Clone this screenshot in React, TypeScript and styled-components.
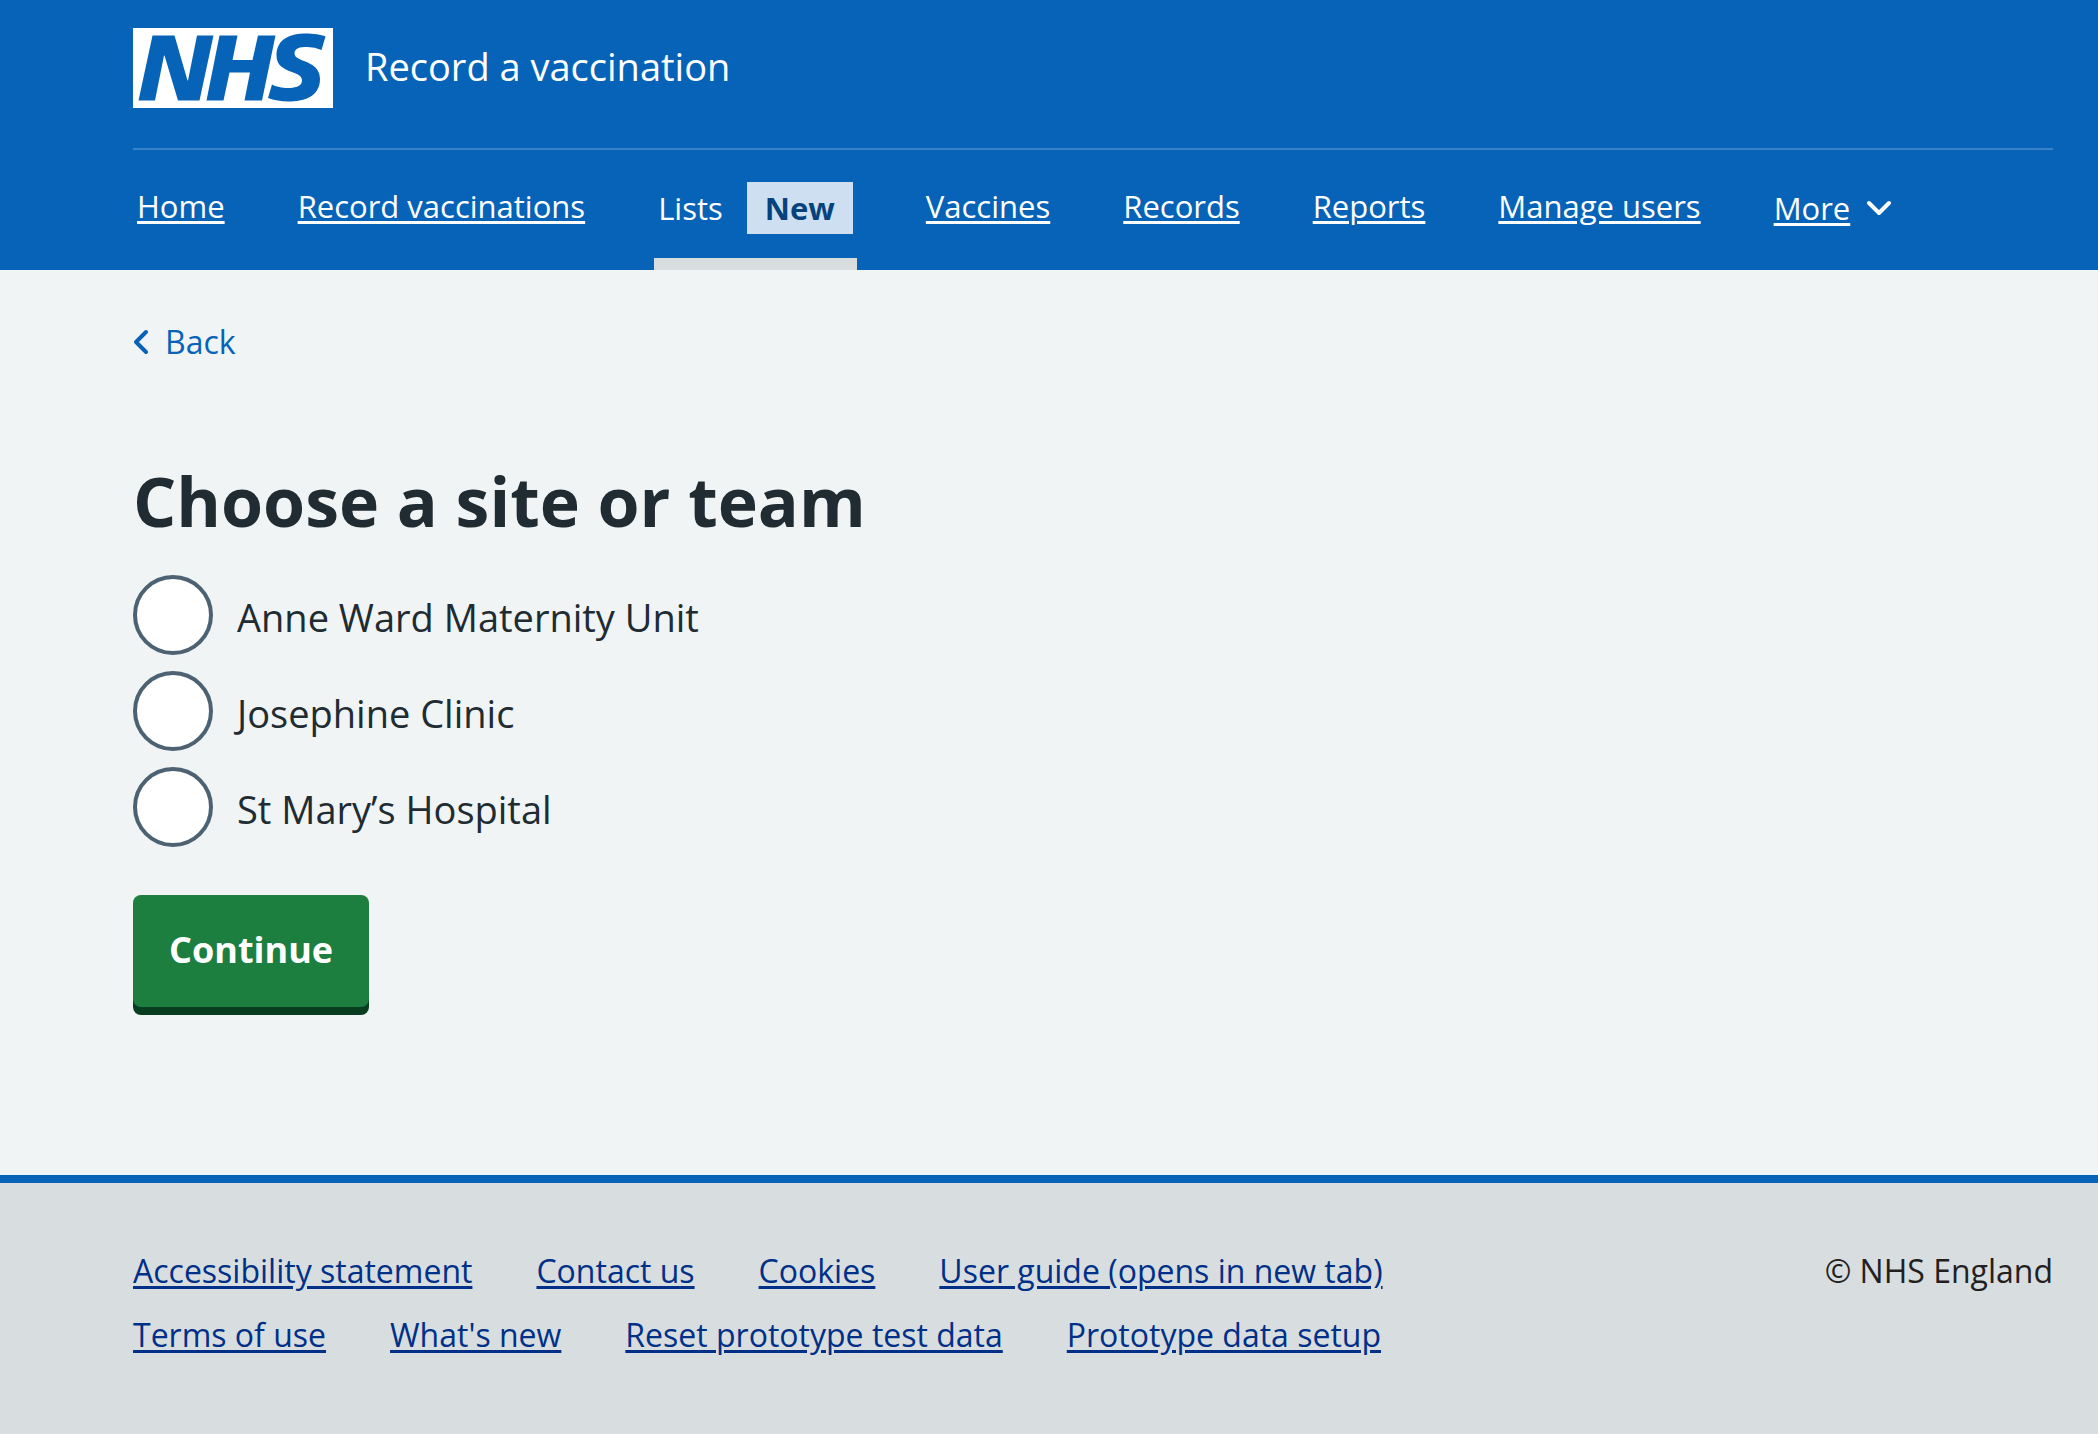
import React from "react";
import styled, { createGlobalStyle } from "styled-components";

const color = {
  blue: "#0763b7",
  darkBlue: "#003087",
  text: "#212b32",
  grey: "#d8dde0",
  page: "#f0f4f5",
  green: "#1c7f3f",
  greenShadow: "#083d1f",
  tagBg: "#cddff1",
  tagText: "#06437e",
  inputBorder: "#4c6272",
};

const GlobalStyle = createGlobalStyle`
  *, *::before, *::after { box-sizing: border-box; }
  body {
    margin: 0;
    background: ${color.grey};
    color: ${color.text};
    font-family: "Open Sans", "Noto Sans", sans-serif;
    font-size: 32px;
    line-height: 48px;
  }
`;

const Container = styled.div`
  padding: 0 45px 0 133px;
`;

const Header = styled.header`
  background: ${color.blue};
  color: #fff;
`;

const Brand = styled.a`
  display: flex;
  align-items: center;
  gap: 32px;
  padding: 28px 0 40px;
  color: inherit;
  font-size: 38px;
  text-decoration: none;
`;

const ServiceName = styled.span`
  padding-bottom: 4px;
`;

const Logo = styled.svg`
  display: block;
  width: 200px;
  height: 80px;
`;

const Nav = styled.nav`
  border-top: 2px solid rgba(255, 255, 255, 0.2);
  font-size: 31px;
`;

const NavList = styled.ul`
  display: flex;
  flex-wrap: wrap;
  gap: 0 65px;
  margin: 0;
  padding: 0;
  list-style: none;
`;

const NavItem = styled.li<{ $current?: boolean; $lowered?: boolean }>`
  display: flex;
  height: 120px;
  padding: ${(p) => (p.$lowered ? 8 : 4)}px 4px 0;
  border-bottom: 12px solid ${(p) => (p.$current ? color.grey : "transparent")};
`;

const NavLink = styled.a<{ $current?: boolean }>`
  display: flex;
  align-items: center;
  gap: 24px;
  color: #fff;
  text-decoration: ${(p) => (p.$current ? "none" : "underline")};
  text-decoration-thickness: 3px;
  text-underline-offset: 3px;
`;

const Tag = styled.strong`
  padding: 2px 18px;
  background: ${color.tagBg};
  color: ${color.tagText};
  font-weight: 700;
`;

const MoreButton = styled.button`
  display: flex;
  align-items: center;
  gap: 16px;
  padding: 0;
  border: 0;
  background: none;
  color: #fff;
  font: inherit;
  text-decoration: underline;
  text-decoration-thickness: 3px;
  text-underline-offset: 3px;
`;

const Page = styled.div`
  padding-top: 48px;
  padding-bottom: 160px;
  background: ${color.page};
`;

const BackLink = styled.a`
  display: inline-flex;
  align-items: center;
  gap: 16px;
  color: ${color.blue};
  text-decoration: none;
`;

const Main = styled.main`
  padding-top: 88px;
`;

const Fieldset = styled.fieldset`
  margin: 0 0 48px;
  padding: 0;
  border: 0;
`;

const Legend = styled.legend`
  padding: 0 0 28px;
`;

const Heading = styled.h1`
  margin: 0;
  font-size: 68px;
  font-weight: 700;
  line-height: 92px;
`;

const Radios = styled.div`
  display: flex;
  flex-direction: column;
  gap: 16px;
`;

const RadioRow = styled.div`
  display: flex;
  align-items: center;
  gap: 24px;
`;

const RadioInput = styled.input`
  appearance: none;
  width: 80px;
  height: 80px;
  margin: 0;
  border: 4px solid ${color.inputBorder};
  border-radius: 50%;
  background: #fff;

  &:checked {
    box-shadow: inset 0 0 0 16px #fff;
    background: ${color.text};
  }
`;

const RadioLabel = styled.label`
  padding-top: 4px;
  font-size: 38px;
`;

const Button = styled.button`
  display: block;
  margin: 0 0 8px;
  padding: 31px 36px 33px;
  border: 0;
  border-radius: 8px;
  background: ${color.green};
  box-shadow: 0 8px 0 ${color.greenShadow};
  color: #fff;
  font: inherit;
  font-size: 36px;
  font-weight: 700;
`;

const Footer = styled.footer`
  padding: 56px 0;
  border-top: 8px solid ${color.blue};
  background: ${color.grey};
`;

const FooterRow = styled.div`
  display: flex;
  justify-content: space-between;
  align-items: flex-start;
  line-height: 64px;
`;

const FooterLinks = styled.ul`
  display: flex;
  flex-wrap: wrap;
  flex: 0 1 1280px;
  gap: 0 64px;
  margin: 0;
  padding: 0;
  list-style: none;
`;

const FooterLink = styled.a`
  color: ${color.darkBlue};
  text-decoration-thickness: 3px;
  text-underline-offset: 3px;
`;

const Copyright = styled.p`
  margin: 0;
  color: #231f20;
`;

const navBefore = ["Home", "Record vaccinations"];
const navAfter = ["Vaccines", "Records", "Reports", "Manage users"];
const sites = ["Anne Ward Maternity Unit", "Josephine Clinic", "St Mary’s Hospital"];
const footerLinks = [
  "Accessibility statement",
  "Contact us",
  "Cookies",
  "User guide (opens in new tab)",
  "Terms of use",
  "What's new",
  "Reset prototype test data",
  "Prototype data setup",
];

const NhsLogo = () => (
  <Logo viewBox="0 0 200 80" role="img" aria-label="NHS">
    <path
      fill="#fff"
      d="M200 0v80H0V0h200Zm-27.5 5.5c-14.5 0-29 5-29 22 0 10.2 7.7 13.5 14.7 16.3l.7.3c5.4 2 10.1 3.9 10.1 8.4 0 6.5-8.5 7.5-14 7.5s-12.5-1.5-16-3.5L135 70c5.5 2 13.5 3.5 20 3.5 15.5 0 32-4.5 32-22.5 0-19.5-25.5-16.5-25.5-25.5 0-5.5 5.5-6.5 12.5-6.5a35 35 0 0 1 14.5 3l4-13.5c-4.5-2-12-3-20-3Zm-131 2h-22l-14 65H22l9-45h.5l13.5 45h21.5l14-65H64l-9 45h-.5l-13-45Zm63 0h-18l-13 65h17l6-28H117l-5.5 28H129l13.5-65H125L119.5 32h-20l5-24.5Z"
    />
  </Logo>
);

export default function App() {
  return (
    <>
      <GlobalStyle />
      <Header>
        <Container>
          <Brand href="#">
            <NhsLogo />
            <ServiceName>Record a vaccination</ServiceName>
          </Brand>
          <Nav aria-label="Menu">
            <NavList>
              {navBefore.map((t) => (
                <NavItem key={t}>
                  <NavLink href="#">{t}</NavLink>
                </NavItem>
              ))}
              <NavItem $current $lowered>
                <NavLink href="#" $current aria-current="page">
                  Lists <Tag>New</Tag>
                </NavLink>
              </NavItem>
              {navAfter.map((t) => (
                <NavItem key={t}>
                  <NavLink href="#">{t}</NavLink>
                </NavItem>
              ))}
              <NavItem $lowered>
                <MoreButton type="button" aria-expanded="false">
                  More
                  <svg width="26" height="16" viewBox="0 0 26 16" aria-hidden="true">
                    <path d="M3 3l10 10L23 3" fill="none" stroke="#fff" strokeWidth="4" strokeLinecap="round" strokeLinejoin="round" />
                  </svg>
                </MoreButton>
              </NavItem>
            </NavList>
          </Nav>
        </Container>
      </Header>
      <Page>
        <Container>
          <BackLink href="#">
            <svg width="16" height="26" viewBox="0 0 16 26" aria-hidden="true">
              <path d="M13 3L3 13l10 10" fill="none" stroke={color.blue} strokeWidth="4" strokeLinecap="round" strokeLinejoin="round" />
            </svg>
            Back
          </BackLink>
          <Main>
            <form>
              <Fieldset>
                <Legend>
                  <Heading>Choose a site or team</Heading>
                </Legend>
                <Radios>
                  {sites.map((site, i) => (
                    <RadioRow key={site}>
                      <RadioInput type="radio" name="site" id={`site-${i}`} value={site} />
                      <RadioLabel htmlFor={`site-${i}`}>{site}</RadioLabel>
                    </RadioRow>
                  ))}
                </Radios>
              </Fieldset>
              <Button type="button">Continue</Button>
            </form>
          </Main>
        </Container>
      </Page>
      <Footer>
        <Container>
          <FooterRow>
            <FooterLinks>
              {footerLinks.map((t) => (
                <li key={t}>
                  <FooterLink href="#">{t}</FooterLink>
                </li>
              ))}
            </FooterLinks>
            <Copyright>© NHS England</Copyright>
          </FooterRow>
        </Container>
      </Footer>
    </>
  );
}
